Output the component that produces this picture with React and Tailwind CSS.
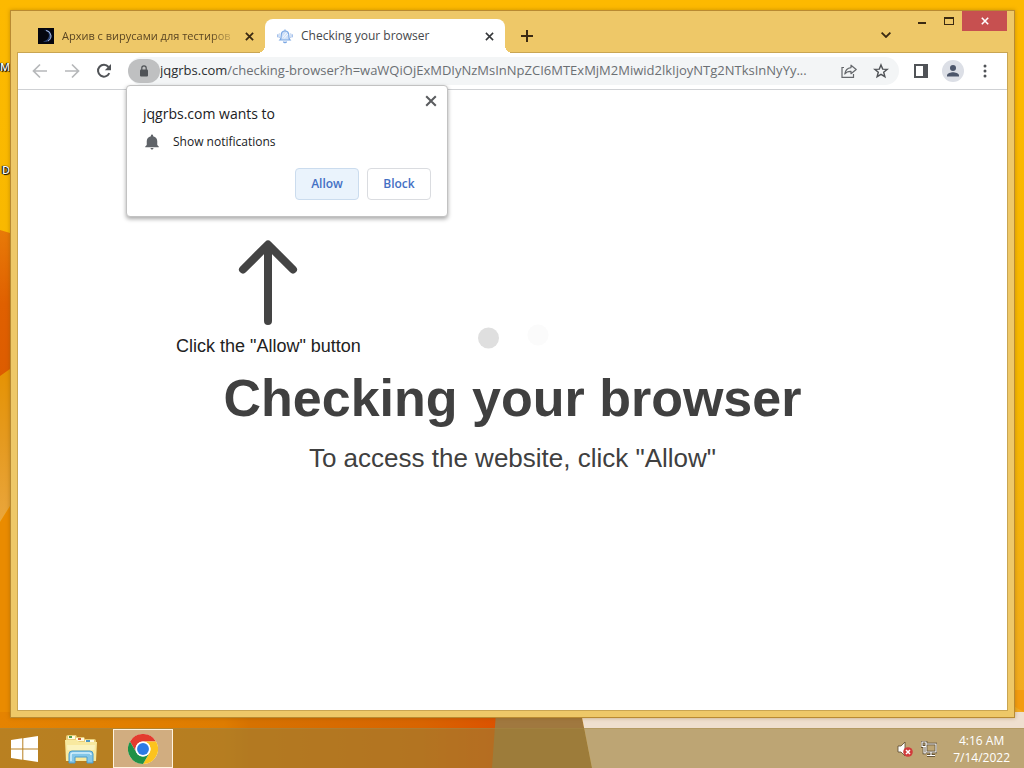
import React from "react";

const URL_PATH =
  "/checking-browser?h=waWQiOjExMDIyNzMsInNpZCI6MTExMjM2Miwid2lkIjoyNTg2NTksInNyYy...";

function Wallpaper() {
  return (
    <svg className="absolute inset-0 h-full w-full" viewBox="0 0 1024 768" preserveAspectRatio="none" aria-hidden="true">
      <defs>
        <linearGradient id="sun" x1="0" y1="0" x2="0" y2="1">
          <stop offset="0" stopColor="#fdb900" />
          <stop offset="0.5" stopColor="#f6b800" />
          <stop offset="1" stopColor="#f0a828" />
        </linearGradient>
        <linearGradient id="ember" x1="0" y1="0" x2="0" y2="1">
          <stop offset="0" stopColor="#e87a08" />
          <stop offset="0.5" stopColor="#e06000" />
          <stop offset="1" stopColor="#dd5c00" />
        </linearGradient>
        <linearGradient id="haze" x1="0" y1="0" x2="0" y2="1">
          <stop offset="0" stopColor="#e59200" />
          <stop offset="0.5" stopColor="#e59a20" />
          <stop offset="1" stopColor="#eaa63c" />
        </linearGradient>
        <linearGradient id="floor" x1="0" y1="0" x2="1" y2="0">
          <stop offset="0" stopColor="#e58300" />
          <stop offset="0.45" stopColor="#de7c00" />
          <stop offset="0.5" stopColor="#d67200" />
          <stop offset="0.85" stopColor="#d86400" />
          <stop offset="1" stopColor="#dc5200" />
        </linearGradient>
      </defs>
      <rect width="1024" height="768" fill="url(#sun)" />
      <path d="M0 230 L20 236 V362 L0 378Z" fill="url(#ember)" />
      <path d="M0 376 L20 362 V490 L0 522Z" fill="url(#haze)" />
      <path d="M0 522 L20 490 V716 H0Z" fill="#ea8b00" />
      <rect y="712" width="498" height="56" fill="url(#floor)" />
      <path d="M496 712 H581 L592 768 H492Z" fill="#a0783f" />
      <path d="M581 712 H1024 V768 H592Z" fill="#efdfcf" />
      <path d="M1010 690 H1024 V712 L1010 704Z" fill="#f39c10" />
    </svg>
  );
}

function Cross({ size, width = 2 }) {
  return (
    <svg width={size} height={size} viewBox="0 0 10 10" fill="none" stroke="currentColor" strokeWidth={width} aria-hidden="true">
      <path d="M1 1 9 9M9 1 1 9" />
    </svg>
  );
}

function TabStrip() {
  return (
    <header className="flex h-[42px] justify-between text-[#3b2a12]">
      <div className="flex min-w-0 items-end pl-2" role="tablist">
        <div className="flex h-[34px] w-[239px] min-w-0 items-center pl-3 pr-1">
          <svg className="shrink-0" width="16" height="16" viewBox="0 0 16 16" aria-hidden="true">
            <rect width="16" height="16" fill="#05060f" />
            <path d="M6 2a6 6 0 1 1-1 11.300a6.500 6.500 0 0 0 6-5.300a6 6 0 0 0-5-6z" fill="#2c4372" />
            <path d="M8 2.500a5.600 5.600 0 0 1 2 10.500" fill="none" stroke="#a9b9dc" strokeWidth="1" />
          </svg>
          <button role="tab" aria-selected="false" className="ml-2 min-w-0 flex-1 whitespace-nowrap text-left text-[11px] text-[#5b4622] [mask-image:linear-gradient(to_right,black_85%,transparent)]">
            Архив с вирусами для тестиров
          </button>
          <button aria-label="Close tab" className="flex h-4 w-6 shrink-0 items-center justify-center">
            <Cross size={9} />
          </button>
        </div>
        <div className="relative flex h-[34px] w-60 min-w-0 items-center rounded-t-lg bg-white pl-3 pr-1 before:absolute before:-left-2 before:bottom-0 before:h-2 before:w-2 before:bg-[radial-gradient(circle_at_0_0,transparent_8px,white_8px)] after:absolute after:-right-2 after:bottom-0 after:h-2 after:w-2 after:bg-[radial-gradient(circle_at_100%_0,transparent_8px,white_8px)]">
          <svg className="shrink-0" width="16" height="16" viewBox="0 0 16 16" fill="none" stroke="#7ba7e3" aria-hidden="true">
            <path d="M8 1.500v1M3 12h10c-1-1-1.200-2-1.200-4.500C11.800 4.500 10.500 3 8 3S4.200 4.500 4.200 7.500C4.200 10 4 11 3 12z" fill="#cfe0f7" strokeWidth="1.200" />
            <path d="M6.500 13.500c.5 1.500 2.500 1.500 3 0" strokeWidth="1.400" />
            <path d="M5.500 9.500 9.500 4.500M7 10.500 11 6" stroke="#f6faff" />
            <path d="M2.300 5.500c-.5 1.500-.5 3 0 4.500M.6 6.300v3M13.700 5.500c.5 1.500.5 3 0 4.500M15.400 6.300v3" stroke="#9dbcea" />
          </svg>
          <button role="tab" aria-selected="true" className="ml-2 min-w-0 flex-1 truncate text-left text-xs text-[#45474a]">
            Checking your browser
          </button>
          <button aria-label="Close tab" className="flex h-4 w-6 shrink-0 items-center justify-center text-[#35373a]">
            <Cross size={9} width={1.7} />
          </button>
        </div>
        <button aria-label="New tab" className="ml-2 flex h-[34px] w-7 shrink-0 items-center justify-center">
          <svg width="12" height="12" viewBox="0 0 12 12" stroke="currentColor" strokeWidth="2" aria-hidden="true">
            <path d="M6 0v12M0 6h12" />
          </svg>
        </button>
      </div>
      <div className="flex shrink-0 items-start">
        <button aria-label="Search tabs" className="mr-2 flex h-12 w-7 items-center justify-center">
          <svg width="10" height="6" viewBox="0 0 10 6" fill="none" stroke="currentColor" strokeWidth="1.800" aria-hidden="true">
            <path d="M.6.6 5 5 9.400.6" />
          </svg>
        </button>
        <button aria-label="Minimize" className="flex h-5 w-7 items-center justify-center pt-1">
          <span className="h-0.5 w-2 bg-current" />
        </button>
        <button aria-label="Maximize" className="flex h-5 w-[26px] items-center justify-center">
          <span className="h-2 w-2.5 border border-t-2 border-current" />
        </button>
        <button aria-label="Close" className="flex h-5 w-[45px] items-center justify-center bg-[#c75050] text-white">
          <Cross size={8} width={2} />
        </button>
      </div>
    </header>
  );
}

function ToolButton({ label, children }) {
  return (
    <button aria-label={label} className="flex h-7 w-8 shrink-0 items-center justify-center">
      {children}
    </button>
  );
}

function PermissionPrompt() {
  return (
    <section role="dialog" aria-labelledby="prompt-title" className="absolute left-[108px] top-8 z-10 w-[322px] rounded border border-[#c2c2c2] bg-white p-4 text-[#202124] shadow-[0_2px_4px_rgba(0,0,0,0.350)]">
      <button aria-label="Dismiss" className="absolute right-2 top-[7px] flex h-4 w-4 items-center justify-center text-[#5a5c5f]">
        <Cross size={12} width={1.700} />
      </button>
      <h2 id="prompt-title" className="text-sm leading-6">jqgrbs.com wants to</h2>
      <p className="mt-1 flex items-center text-xs leading-6">
        <svg className="mr-3" width="18" height="18" viewBox="0 0 24 24" fill="#5f6368" aria-hidden="true">
          <path d="M12 22c1.100 0 2-.9 2-2h-4c0 1.100.9 2 2 2zm7-6v-5c0-3.500-2-6-5.500-6.800V3.500a1.500 1.500 0 0 0-3 0v.7C7 5 5 7.500 5 11v5l-2 2v1h18v-1z" />
        </svg>
        Show notifications
      </p>
      <div className="mt-3.5 flex justify-end gap-2 text-xs font-semibold text-[#4470c4]">
        <button className="h-8 w-16 rounded border border-[#cbdcee] bg-[#eaf3fc]">Allow</button>
        <button className="h-8 w-16 rounded border border-[#dadce0] bg-white">Block</button>
      </div>
    </section>
  );
}

function Toolbar() {
  return (
    <div className="relative flex h-[37px] items-center border-b border-[#cfd1d4] bg-white px-1.5">
      <ToolButton label="Back">
        <svg width="16" height="16" viewBox="0 0 16 16" fill="none" stroke="#b6b8ba" strokeWidth="1.700" aria-hidden="true">
          <path d="M15 8H2M8 1.500 1.500 8 8 14.500" />
        </svg>
      </ToolButton>
      <ToolButton label="Forward">
        <svg width="16" height="16" viewBox="0 0 16 16" fill="none" stroke="#b6b8ba" strokeWidth="1.700" aria-hidden="true">
          <path d="M1 8h13M8 1.500 14.500 8 8 14.500" />
        </svg>
      </ToolButton>
      <ToolButton label="Reload">
        <svg width="16" height="16" viewBox="0 0 16 16" aria-hidden="true">
          <path d="M13.300 10.200A5.900 5.900 0 1 1 12.500 4" fill="none" stroke="#505357" strokeWidth="2" />
          <path d="M15 1v6.200H8.800z" fill="#505357" />
        </svg>
      </ToolButton>
      <div className="ml-2 flex h-7 min-w-0 flex-1 items-center rounded-full bg-[#f3f5f6] pr-0.5">
        <button aria-label="View site information" className="flex h-6 w-8 shrink-0 items-center justify-center rounded-full bg-[#bfc0c1]">
          <svg width="10" height="12" viewBox="0 0 10 12" aria-hidden="true">
            <rect x="1" y="4.500" width="8" height="7" rx="1" fill="#505357" />
            <path d="M2.800 5V3a2.200 2.200 0 0 1 4.400 0v2" fill="none" stroke="#505357" strokeWidth="1.200" />
          </svg>
        </button>
        <a href="#address" className="min-w-0 flex-1 truncate text-[13px] text-[#6b6f73]">
          <span className="text-[#2b2d30]">jqgrbs.com</span>
          {URL_PATH}
        </a>
        <ToolButton label="Share this page">
          <svg width="16" height="16" viewBox="0 0 16 16" fill="none" stroke="#65686c" strokeWidth="1.200" aria-hidden="true">
            <path d="M3 4.500H1v9.900h11.500V11" />
            <path d="M10 2.200 15.200 6.500 10 10.700V8.300C7 8.200 5.200 9 3.800 11 4.300 7.500 6.200 5 10 4.600z" strokeLinejoin="round" />
          </svg>
        </ToolButton>
        <ToolButton label="Bookmark this tab">
          <svg width="16" height="16" viewBox="0 0 16 16" fill="none" stroke="#505357" strokeWidth="1.400" aria-hidden="true">
            <path d="m8 1.900 1.700 4.200 4.500.3-3.500 2.900 1.200 4.400L8 11.300l-3.900 2.400 1.200-4.400-3.500-2.900 4.500-.3z" />
          </svg>
        </ToolButton>
      </div>
      <div className="ml-1.5 flex">
        <ToolButton label="Side panel">
          <svg width="14" height="14" viewBox="0 0 14 14" aria-hidden="true">
            <rect x="1" y="1" width="12" height="12" fill="none" stroke="#505357" strokeWidth="2" />
            <rect x="9" y="1" width="4" height="12" fill="#505357" />
          </svg>
        </ToolButton>
        <ToolButton label="Profile">
          <svg width="22" height="22" viewBox="0 0 22 22" aria-hidden="true">
            <circle cx="11" cy="11" r="11" fill="#dcdfe6" />
            <circle cx="11" cy="8" r="3" fill="#4c566b" />
            <path d="M5 16.500v-1.200c0-2 4-3.100 6-3.100s6 1.100 6 3.100v1.200z" fill="#4c566b" />
          </svg>
        </ToolButton>
        <ToolButton label="Menu">
          <svg width="4" height="14" viewBox="0 0 4 14" fill="#505357" aria-hidden="true">
            <circle cx="2" cy="2" r="1.500" />
            <circle cx="2" cy="7" r="1.500" />
            <circle cx="2" cy="12" r="1.500" />
          </svg>
        </ToolButton>
      </div>
      <PermissionPrompt />
    </div>
  );
}

function Page() {
  return (
    <main className="flex-1 bg-white pt-[150px] font-['Liberation_Sans',sans-serif] text-[#404040]">
      <div className="grid grid-cols-[1fr_72px_1fr]">
        <div className="flex w-max flex-col items-center pl-[158px]">
          <svg width="60" height="86" viewBox="0 0 60 86" fill="none" stroke="#444444" strokeWidth="8" strokeLinecap="round" strokeLinejoin="round" aria-hidden="true">
            <path d="M30 81V5M5 29.500 30 4.500 55 29.500" />
          </svg>
          <p className="mt-2 text-lg leading-6 text-[#222222]">Click the "Allow" button</p>
        </div>
        <div className="flex items-end pb-2">
          <svg width="72" height="26" viewBox="0 0 72 26" aria-hidden="true">
            <circle cx="11.500" cy="14" r="10.500" fill="#dfdfdf" />
            <circle cx="61" cy="11" r="10.500" fill="#fbfbfb" />
          </svg>
        </div>
      </div>
      <h1 className="mt-2.5 text-center text-[52px] font-bold leading-[60px]">Checking your browser</h1>
      <p className="mt-3.5 text-center text-[26px] leading-8">To access the website, click "Allow"</p>
    </main>
  );
}

function Taskbar() {
  return (
    <footer className="relative flex h-10 items-center justify-between border-t border-[#a88a4c]/40 bg-[rgba(155,126,55,0.600)] pr-3.5">
      <nav className="flex h-full items-center">
        <button aria-label="Start" className="flex h-full w-12 items-center justify-center">
          <svg width="27" height="26" viewBox="0 0 27 26" fill="#ffffff" aria-hidden="true">
            <path d="M0 4 11.300 2.300V12.500H0zM12.300 2.200 27 0V12.500H12.300zM0 13.500h11.300v10.200L0 22zM12.300 13.500H27V26l-14.700-2.200z" />
          </svg>
        </button>
        <button aria-label="File Explorer" className="ml-1 flex h-full w-[58px] items-center justify-center">
          <svg width="32" height="30" viewBox="0 0 32 30" aria-hidden="true">
            <path d="M1 3q0-2 2-2h8l1 2h7l1 2h9q2 0 2 2v18H1z" fill="#e9cf78" />
            <path d="M3 2h7v3H3zM11 4h8v3h-8zM20 6h9v3h-9z" fill="#fff9df" />
            <path d="M4 2h3v2H4z" fill="#4d9b4b" />
            <path d="M13 4h3v2h-3z" fill="#ce6539" />
            <path d="M21 6h4v2h-4z" fill="#4f97bf" />
            <path d="M0 6h12l2 2h18l-1 19H1z" fill="#f8e99f" />
            <path d="M2 11h28l-.5 5h-27z" fill="#fbf3bd" />
            <path d="M13 4h3v2h-3z" fill="#ce6539" />
            <path d="M4 29V20q0-3 3-3h18q3 0 3 3v9h-6v-6H10v6z" fill="#83c6e8" stroke="#4b9ccb" />
            <path d="M6 27v-6q0-2 2-2h16q2 0 2 2" fill="none" stroke="#d3effb" strokeWidth="1.500" />
          </svg>
        </button>
        <button aria-label="Google Chrome" className="ml-[3px] flex h-[39px] w-[60px] items-center justify-center border border-[#fff3df] bg-[#d1ad80]">
          <svg width="30" height="30" viewBox="0 0 48 48" aria-hidden="true">
            <circle cx="24" cy="24" r="24" fill="#fff" />
            <path d="M3.200 12A24 24 0 0 1 44.800 12H24A12 12 0 0 0 13.600 30z" fill="#e33b2e" />
            <path d="M44.800 12A24 24 0 0 1 24 48L34.400 30A12 12 0 0 0 24 12z" fill="#fcc31e" />
            <path d="M24 48A24 24 0 0 1 3.200 12L13.600 30A12 12 0 0 0 34.400 30z" fill="#1f9146" />
            <circle cx="24" cy="24" r="12" fill="#fff" />
            <circle cx="24" cy="24" r="9.500" fill="#2d7be5" />
          </svg>
        </button>
      </nav>
      <div className="flex items-center text-white">
        <button aria-label="Volume muted" className="mr-2">
          <svg width="16" height="16" viewBox="0 0 16 16" aria-hidden="true">
            <path d="M1 5h3l4-4v14l-4-4H1z" fill="#fff" stroke="#59472b" strokeWidth="0.800" />
            <circle cx="11" cy="11" r="4.800" fill="#d13b3b" />
            <path d="m9 9 4 4m0-4-4 4" stroke="#fff" strokeWidth="1.500" />
          </svg>
        </button>
        <button aria-label="Network" className="mr-4">
          <svg width="16" height="16" viewBox="0 0 16 16" fill="none" aria-hidden="true">
            <path d="M5 3h10v8H5zM10 11v3M6 14.500h8M3 6v6h2M1 1h4v4.500H1z" stroke="#4c3d25" strokeWidth="2.600" />
            <path d="M5 3h10v8H5zM10 11v3M6 14.500h8M3 6v6h2M1 1h4v4.500H1z" stroke="#fff" strokeWidth="1.200" />
          </svg>
        </button>
        <time className="text-center text-xs leading-[17px]">
          <span className="block">4:16 AM</span>
          <span className="block">7/14/2022</span>
        </time>
      </div>
    </footer>
  );
}

export default function App() {
  return (
    <div className="relative flex min-h-screen flex-col overflow-hidden font-['Open_Sans','Noto_Sans',sans-serif]">
      <Wallpaper />
      <span className="absolute left-0 top-[59px] text-[11px] font-semibold leading-4 text-white [text-shadow:0_0_1px_#000,1px_1px_1px_#000,-1px_0_1px_#000]">M</span>
      <span className="absolute left-0.5 top-[162px] text-[11px] font-semibold leading-4 text-white [text-shadow:0_0_1px_#000,1px_1px_1px_#000,-1px_0_1px_#000]">D</span>
      <div className="relative flex flex-1 flex-col py-2.5 pl-2.5 pr-[9px]">
        <div className="flex flex-1 flex-col border border-[#b98a32] bg-[#eec868] px-[7px] pb-[7px] shadow-[0_0_4px_rgba(120,80,0,0.400)]">
          <TabStrip />
          <div className="flex flex-1 flex-col shadow-[0_0_0_1px_#c9a552]">
            <Toolbar />
            <Page />
          </div>
        </div>
      </div>
      <Taskbar />
    </div>
  );
}
